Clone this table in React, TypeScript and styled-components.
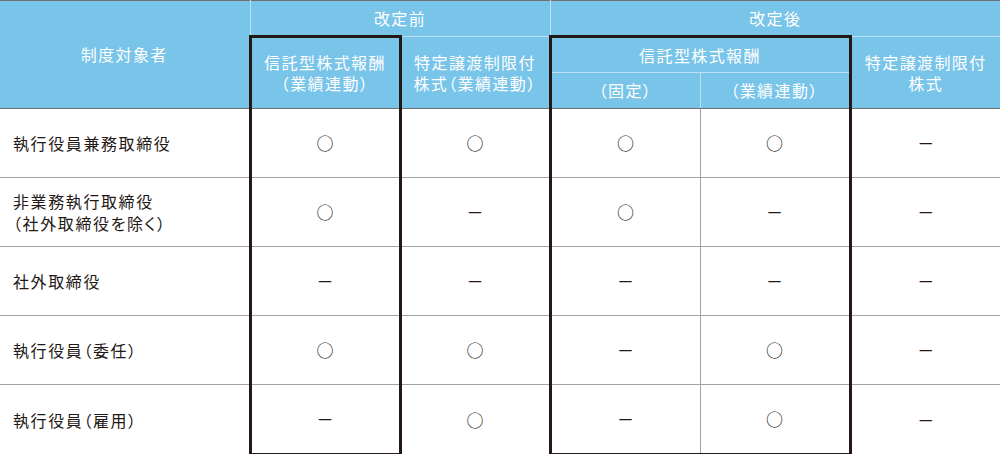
import styled, { createGlobalStyle } from "styled-components";

const GlobalStyle = createGlobalStyle`
  html, body {
    margin: 0;
    padding: 0;
    background: #ffffff;
  }
  body {
    font-family: "Noto Sans CJK JP", "Noto Sans", sans-serif;
  }
`;

type Edge = "box" | "light" | "grid" | "dark" | "none";

const edges: Record<Edge, string> = {
  box: "3px solid #231815",
  light: "1px solid #bde1f4",
  grid: "1px solid #a3a3a3",
  dark: "1px solid #6f6f6f",
  none: "none",
};

interface EdgeProps {
  $t?: Edge;
  $r?: Edge;
  $b?: Edge;
  $l?: Edge;
  $h?: number;
}

const Table = styled.table`
  width: 1000px;
  border-collapse: collapse;
  table-layout: fixed;
  border-top: 1px solid #5a5a5a;
  font-feature-settings: "palt";
`;

const Head = styled.th<EdgeProps>`
  background: #79c4e9;
  color: #ffffff;
  font-weight: 400;
  font-size: 16px;
  letter-spacing: 1.4px;
  line-height: 21px;
  text-align: center;
  vertical-align: middle;
  padding: 0;
  height: ${(p) => p.$h ?? 34}px;
  border-top: ${(p) => edges[p.$t ?? "light"]};
  border-right: ${(p) => edges[p.$r ?? "light"]};
  border-bottom: ${(p) => edges[p.$b ?? "light"]};
  border-left: ${(p) => edges[p.$l ?? "light"]};
`;

const Cell = styled.td<EdgeProps & { $label?: boolean }>`
  height: 68px;
  padding: 0 0 0 ${(p) => (p.$label ? 13 : 0)}px;
  text-align: ${(p) => (p.$label ? "left" : "center")};
  vertical-align: middle;
  color: #231815;
  font-size: 16px;
  letter-spacing: ${(p) => (p.$label ? 1.6 : 0)}px;
  line-height: 22px;
  white-space: pre-line;
  border-top: ${(p) => edges[p.$t ?? "grid"]};
  border-right: ${(p) => edges[p.$r ?? "none"]};
  border-bottom: ${(p) => edges[p.$b ?? "grid"]};
  border-left: ${(p) => edges[p.$l ?? "none"]};
`;

const Mark = styled.span`
  display: inline-block;
  font-size: 17px;
  line-height: 22px;
`;

const rows: [string, string, string, string, string, string][] = [
  ["執行役員兼務取締役", "○", "○", "○", "○", "－"],
  ["非業務執行取締役\n（社外取締役を除く）", "○", "－", "○", "－", "－"],
  ["社外取締役", "－", "－", "－", "－", "－"],
  ["執行役員（委任）", "○", "○", "－", "○", "－"],
  ["執行役員（雇用）", "－", "○", "－", "○", "－"],
];

const bodyEdges: { l: Edge; r: Edge; lastB: Edge }[] = [
  { l: "box", r: "box", lastB: "box" },
  { l: "box", r: "box", lastB: "grid" },
  { l: "box", r: "grid", lastB: "box" },
  { l: "grid", r: "box", lastB: "box" },
  { l: "box", r: "none", lastB: "grid" },
];

export default function App() {
  return (
    <>
      <GlobalStyle />
      <Table>
        <colgroup>
          <col style={{ width: 250 }} />
          <col style={{ width: 150 }} />
          <col style={{ width: 150 }} />
          <col style={{ width: 150 }} />
          <col style={{ width: 150 }} />
          <col style={{ width: 150 }} />
        </colgroup>
        <thead>
          <tr>
            <Head rowSpan={3} $l="none" $t="dark" $b="dark">
              制度対象者
            </Head>
            <Head colSpan={2} $t="dark">
              改定前
            </Head>
            <Head colSpan={3} $t="dark" $r="none">
              改定後
            </Head>
          </tr>
          <tr>
            <Head rowSpan={2} $h={34} $t="box" $l="box" $r="box" $b="dark">
              信託型株式報酬
              <br />
              （業績連動）
            </Head>
            <Head rowSpan={2} $l="box" $r="box" $b="dark">
              特定譲渡制限付
              <br />
              株式（業績連動）
            </Head>
            <Head colSpan={2} $h={34} $t="box" $l="box" $r="box">
              信託型株式報酬
            </Head>
            <Head rowSpan={2} $l="box" $r="none" $b="dark">
              特定譲渡制限付
              <br />
              株式
            </Head>
          </tr>
          <tr>
            <Head $h={35} $l="box" $b="dark">
              （固定）
            </Head>
            <Head $h={35} $r="box" $b="dark">
              （業績連動）
            </Head>
          </tr>
        </thead>
        <tbody>
          {rows.map((row, i) => {
            const last = i === rows.length - 1;
            return (
              <tr key={row[0]}>
                <Cell $label>{row[0]}</Cell>
                {row.slice(1).map((mark, j) => (
                  <Cell
                    key={j}
                    $l={bodyEdges[j].l}
                    $r={bodyEdges[j].r}
                    $b={last ? bodyEdges[j].lastB : "grid"}
                  >
                    <Mark>{mark}</Mark>
                  </Cell>
                ))}
              </tr>
            );
          })}
        </tbody>
      </Table>
    </>
  );
}
